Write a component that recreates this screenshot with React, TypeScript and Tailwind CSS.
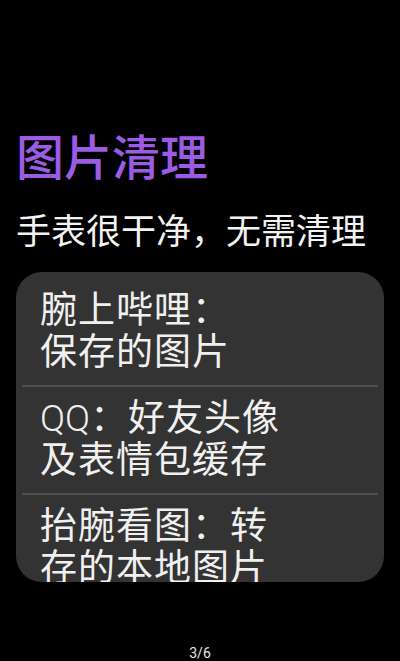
import React from "react";

const items: React.ReactNode[][] = [
  ["腕上哔哩：", "保存的图片"],
  [
    <>
      <span className="font-light tracking-normal">QQ</span>：好友头像
    </>,
    "及表情包缓存",
  ],
  ["抬腕看图：转", "存的本地图片"],
];

export default function App() {
  return (
    <div
      className="w-[400px] h-[661px] bg-black text-white flex flex-col overflow-hidden"
      style={{ fontFamily: '"Roboto", "Noto Sans CJK SC", sans-serif' }}
    >
      <div className="px-4 pt-[130px]">
        <div className="text-[48px] leading-[57px] font-medium text-[#9b5be3]">图片清理</div>
        <div className="mt-[25px] text-[35px] leading-[41px] text-[#f2f2f2]">手表很干净，无需清理</div>
      </div>
      <div className="mx-4 mt-[19px] h-[310px] rounded-[26px] bg-[#333333] overflow-hidden pt-[7px]">
        {items.map((lines, i) => (
          <div key={i}>
            {i > 0 && <div className="mx-[6px] h-[2px] bg-[#505050]" />}
            <div className="px-[24px] pt-[11px] pb-[11px] text-[37px] leading-[42px] tracking-[1px] text-[#f0f0f0]">
              {lines.map((l, j) => (
                <div key={j} className="whitespace-nowrap">{l}</div>
              ))}
            </div>
          </div>
        ))}
      </div>
      <div className="mt-auto pb-[1px] text-center text-[14px] leading-[14px] text-[#e8e8e8]">3/6</div>
    </div>
  );
}
